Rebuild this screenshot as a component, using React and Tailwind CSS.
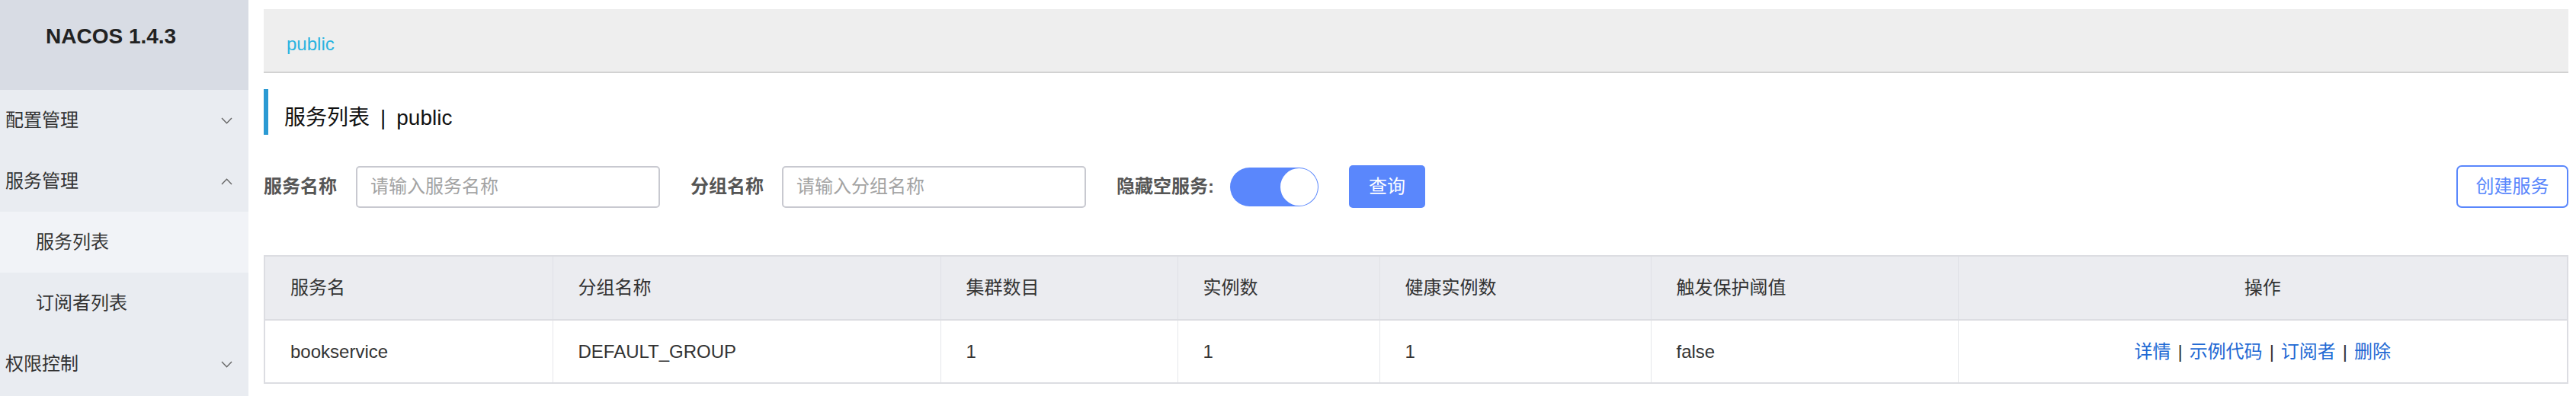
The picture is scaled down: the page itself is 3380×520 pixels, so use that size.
import { useState } from "react";

const menu = [
  { label: "配置管理", open: false },
  { label: "服务管理", open: true, children: ["服务列表", "订阅者列表"] },
  { label: "权限控制", open: false },
];

const columns = [
  { title: "服务名", width: 378 },
  { title: "分组名称", width: 509 },
  { title: "集群数目", width: 311 },
  { title: "实例数", width: 265 },
  { title: "健康实例数", width: 356 },
  { title: "触发保护阈值", width: 403 },
  { title: "操作", width: 800, center: true },
];

const rows = [
  {
    name: "bookservice",
    group: "DEFAULT_GROUP",
    clusters: 1,
    instances: 1,
    healthy: 1,
    threshold: "false",
  },
];

function Chevron({ up }) {
  return (
    <svg width="15" height="9" viewBox="0 0 15 9" fill="none">
      <polyline
        points={up ? "1,8 7.5,1.2 14,8" : "1,1 7.5,7.8 14,1"}
        stroke="#666"
        strokeWidth="1.4"
      />
    </svg>
  );
}

function Sidebar() {
  return (
    <aside className="w-[326px] shrink-0 bg-[#e9ecf1] flex flex-col">
      <div className="h-[118px] bg-[#d8dce4] pl-[60px] pt-[32px]">
        <h1 className="text-[28px] leading-[32px] font-bold text-[#222]">
          NACOS 1.4.3
        </h1>
      </div>
      {menu.map((item) => (
        <div key={item.label}>
          <div className="h-[80px] flex items-center justify-between pl-[7px] pr-[21px] text-[24px] text-[#333]">
            <span>{item.label}</span>
            <Chevron up={item.open} />
          </div>
          {item.open &&
            item.children.map((child, i) => (
              <div
                key={child}
                className={
                  "h-[80px] flex items-center pl-[47px] text-[24px] text-[#333] " +
                  (i === 0 ? "bg-[#f1f3f7]" : "")
                }
              >
                {child}
              </div>
            ))}
        </div>
      ))}
    </aside>
  );
}

function SearchBar() {
  const [hideEmpty, setHideEmpty] = useState(true);

  return (
    <div className="mt-[40px] h-[56px] flex items-center">
      <label className="text-[24px] font-bold text-[#555] mr-[25px]">服务名称</label>
      <input
        placeholder="请输入服务名称"
        className="w-[399px] h-[55px] border-2 border-[#c8c9d0] rounded-[5px] pl-[17px] text-[24px] placeholder-[#a3a3a3] outline-none"
      />
      <label className="ml-[40px] mr-[24px] text-[24px] font-bold text-[#555]">分组名称</label>
      <input
        placeholder="请输入分组名称"
        className="w-[399px] h-[55px] border-2 border-[#c8c9d0] rounded-[5px] pl-[17px] text-[24px] placeholder-[#a3a3a3] outline-none"
      />
      <label className="ml-[40px] mr-[21px] text-[24px] font-bold text-[#555]">隐藏空服务:</label>
      <button
        onClick={() => setHideEmpty(!hideEmpty)}
        className={
          "w-[116px] h-[51px] rounded-full p-[1px] flex items-center " +
          (hideEmpty ? "bg-[#5a87fc] justify-end" : "bg-[#cfd2d9] justify-start")
        }
      >
        <span className="w-[49px] h-[49px] rounded-full bg-white" />
      </button>
      <button className="ml-[40px] w-[100px] h-[56px] rounded-[5px] bg-[#5a87fc] text-white text-[24px]">
        查询
      </button>
      <button className="ml-auto w-[147px] h-[56px] rounded-[7px] border-2 border-[#5a87fc] text-[#5a87fc] text-[24px]">
        创建服务
      </button>
    </div>
  );
}

function ServiceTable() {
  return (
    <table className="mt-[62px] w-full table-fixed border-collapse border-2 border-[#dcdde2] text-[24px] text-[#333]">
      <colgroup>
        {columns.map((c) => (
          <col key={c.title} style={{ width: c.width }} />
        ))}
      </colgroup>
      <thead>
        <tr className="h-[84px] bg-[#ebecf0] border-b-2 border-[#dcdde2]">
          {columns.map((c) => (
            <th
              key={c.title}
              className={
                "font-normal border-x border-[#e0e1e6] px-[33px] " +
                (c.center ? "text-center" : "text-left")
              }
            >
              {c.title}
            </th>
          ))}
        </tr>
      </thead>
      <tbody>
        {rows.map((r) => (
          <tr key={r.name} className="h-[83px] bg-white">
            <td className="border-x border-[#e6e7eb] px-[33px]">{r.name}</td>
            <td className="border-x border-[#e6e7eb] px-[33px]">{r.group}</td>
            <td className="border-x border-[#e6e7eb] px-[33px]">{r.clusters}</td>
            <td className="border-x border-[#e6e7eb] px-[33px]">{r.instances}</td>
            <td className="border-x border-[#e6e7eb] px-[33px]">{r.healthy}</td>
            <td className="border-x border-[#e6e7eb] px-[33px]">{r.threshold}</td>
            <td className="border-x border-[#e6e7eb] px-[33px] text-center">
              <a className="text-[#2169d4] cursor-pointer">详情</a>
              <span className="px-[9px]">|</span>
              <a className="text-[#2169d4] cursor-pointer">示例代码</a>
              <span className="px-[9px]">|</span>
              <a className="text-[#2169d4] cursor-pointer">订阅者</a>
              <span className="px-[9px]">|</span>
              <a className="text-[#2169d4] cursor-pointer">删除</a>
            </td>
          </tr>
        ))}
      </tbody>
    </table>
  );
}

export default function App() {
  return (
    <div className="flex w-[3380px] h-[520px] overflow-hidden bg-white font-['Liberation_Sans','Noto_Sans_CJK_SC',sans-serif]">
      <Sidebar />

      <main className="flex-1 pl-[20px] pr-[12px]">
        {/* Breadcrumb */}
        <div className="mt-[12px] h-[84px] bg-[#eeeeee] border-b-2 border-[#d2d2d2] flex items-center pl-[30px] pt-[10px]">
          <span className="text-[24px] text-[#2ab4e0]">public</span>
        </div>

        {/* Title */}
        <div className="mt-[21px] h-[60px] border-l-[6px] border-[#2b9ad3] flex items-center pl-[21px] pt-[16px] text-[28px] text-[#111]">
          <span>服务列表</span>
          <span className="mx-[14px]">|</span>
          <span>public</span>
        </div>

        <SearchBar />
        <ServiceTable />
      </main>
    </div>
  );
}
